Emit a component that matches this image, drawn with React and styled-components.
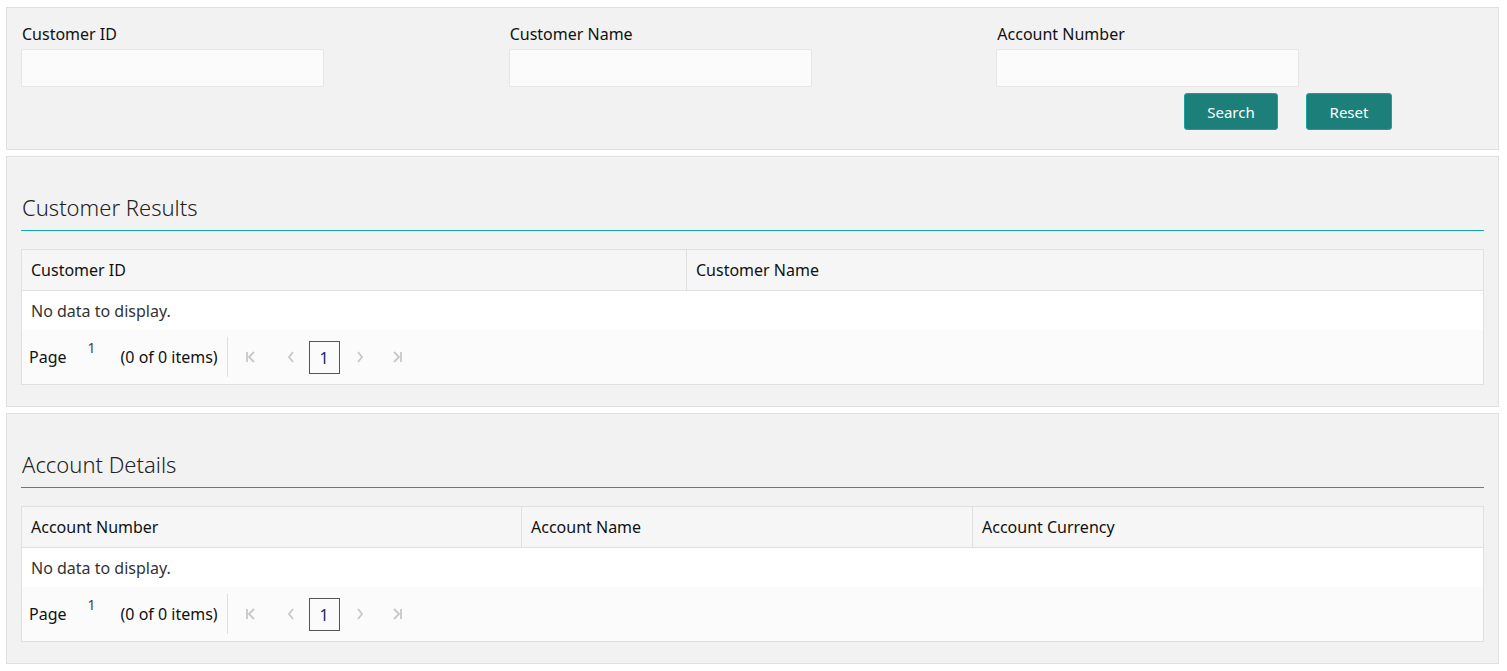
import { createGlobalStyle } from "styled-components";
import { styled } from "styled-components";

const GlobalStyle = createGlobalStyle`
  html, body {
    margin: 0;
    padding: 0;
    background: #ffffff;
  }
  body {
    font-family: "Segoe UI", "Noto Sans", "Open Sans", sans-serif;
    color: #222;
  }
`;

const Page = styled.div`
  padding: 7px 8px 7px 6px;
  display: flex;
  flex-direction: column;
  gap: 6px;
`;

const Panel = styled.section`
  background: #f2f2f2;
  border: 1px solid #e0e0e0;
  padding: ${(p) => p.$pad || "14px 14px 21px"};
`;

const FilterGrid = styled.div`
  display: grid;
  grid-template-columns: repeat(3, 1fr);
`;

const Field = styled.div`
  display: flex;
  flex-direction: column;
  gap: 4px;
`;

const Label = styled.label`
  font-size: 16px;
  line-height: 22px;
  color: #111;
  padding-left: 1px;
`;

const Input = styled.input`
  width: 303px;
  height: 38px;
  box-sizing: border-box;
  border: 1px solid #e6e6e6;
  border-radius: 2px;
  background: #fbfbfb;
  outline: none;
`;

const Actions = styled.div`
  display: flex;
  justify-content: flex-end;
  gap: 28px;
  padding: 6px 92px 0 0;
`;

const Button = styled.button`
  height: 37px;
  width: ${(p) => p.$w}px;
  background: #1c7f7a;
  border: 1px solid #16a39a;
  border-radius: 3px;
  color: #fff;
  font-family: inherit;
  font-size: 15px;
  cursor: pointer;
`;

const Title = styled.h2`
  margin: 0;
  padding: 20px 0 7px 1px;
  font-size: 22px;
  font-weight: 300;
  line-height: 32px;
  color: #222;
  border-bottom: 1px solid ${(p) => (p.$dark ? "#2b9494" : "#10a8a8")};
`;

const Table = styled.div`
  margin-top: 18px;
  border: 1px solid #e0e0e0;
  background: #fff;
`;

const HeadRow = styled.div`
  display: grid;
  grid-template-columns: ${(p) => p.$cols};
  background: #f6f6f6;
  border-bottom: 1px solid #e0e0e0;
`;

const HeadCell = styled.div`
  height: 40px;
  display: flex;
  align-items: center;
  padding-left: 9px;
  font-size: 16px;
  color: #111;
  & + & {
    border-left: 1px solid #e0e0e0;
  }
`;

const Empty = styled.div`
  height: 39px;
  display: flex;
  align-items: center;
  padding-left: 9px;
  font-size: 16px;
  color: #333;
`;

const Pager = styled.div`
  height: 54px;
  background: #fbfbfb;
  display: flex;
  align-items: center;
  padding-left: 7px;
`;

const PagerText = styled.span`
  font-size: 16px;
  color: #111;
`;

const PageNo = styled.span`
  font-size: 14px;
  color: #444;
  margin: 0 25px 0 21px;
  align-self: flex-start;
  padding-top: 8px;
`;

const Divider = styled.span`
  width: 1px;
  height: 40px;
  background: #e0e0e0;
  margin: 0 8px 0 9px;
`;

const NavBtn = styled.span`
  width: ${(p) => p.$w || 30}px;
  box-sizing: border-box;
  padding-left: ${(p) => p.$pl || 0}px;
  display: flex;
  justify-content: ${(p) => (p.$pl ? "flex-start" : "center")};
  align-items: center;
  color: #c8c8c8;
`;

const Current = styled.span`
  width: 31px;
  height: 33px;
  box-sizing: border-box;
  border: 1px solid #555;
  display: flex;
  align-items: center;
  justify-content: center;
  font-size: 16px;
  color: #1a2a6a;
  padding-top: 2px;
  margin: 0 5px 0 3px;
`;

const Icon = ({ d }) => (
  <svg width="14" height="14" viewBox="0 0 14 14" fill="none" stroke="currentColor" strokeWidth="1.8">
    <path d={d} />
  </svg>
);

const PagerBar = () => (
  <Pager>
    <PagerText>Page</PagerText>
    <PageNo>1</PageNo>
    <PagerText>(0 of 0 items)</PagerText>
    <Divider />
    <NavBtn><Icon d="M3 2v10M10 2L5 7l5 5" /></NavBtn>
    <NavBtn $w={40} $pl={18}><Icon d="M9 2L5 7l4 5" /></NavBtn>
    <Current>1</Current>
    <NavBtn><Icon d="M5 2l4 5-4 5" /></NavBtn>
    <NavBtn $w={44}><Icon d="M4 2l5 5-5 5M11 2v10" /></NavBtn>
  </Pager>
);

const ResultTable = ({ cols, headers }) => (
  <Table>
    <HeadRow $cols={cols}>
      {headers.map((h) => (
        <HeadCell key={h}>{h}</HeadCell>
      ))}
    </HeadRow>
    <Empty>No data to display.</Empty>
    <PagerBar />
  </Table>
);

export default function App() {
  return (
    <>
      <GlobalStyle />
      <Page>
        <Panel $pad="15px 14px 19px">
          <FilterGrid>
            <Field>
              <Label>Customer ID</Label>
              <Input />
            </Field>
            <Field>
              <Label>Customer Name</Label>
              <Input />
            </Field>
            <Field>
              <Label>Account Number</Label>
              <Input />
            </Field>
          </FilterGrid>
          <Actions>
            <Button $w={94}>Search</Button>
            <Button $w={86}>Reset</Button>
          </Actions>
        </Panel>

        <Panel>
          <Title>Customer Results</Title>
          <ResultTable cols="664px 1fr" headers={["Customer ID", "Customer Name"]} />
        </Panel>

        <Panel>
          <Title $dark>Account Details</Title>
          <ResultTable
            cols="499px 451px 1fr"
            headers={["Account Number", "Account Name", "Account Currency"]}
          />
        </Panel>
      </Page>
    </>
  );
}
